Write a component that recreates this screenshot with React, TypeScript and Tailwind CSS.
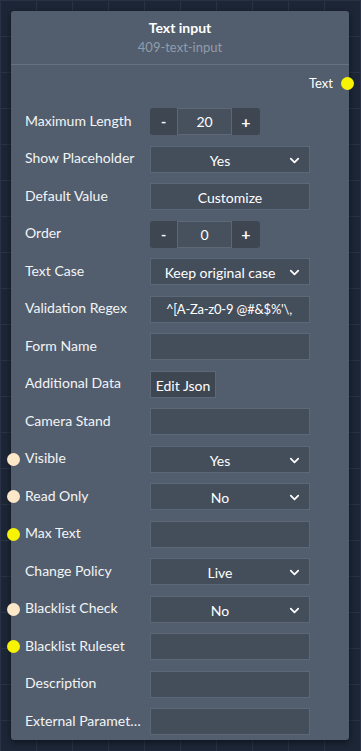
import { ChevronDown } from 'lucide-react';

type Row = {
  label: string;
  kind: 'stepper' | 'select' | 'button' | 'input' | 'json';
  value?: string;
  dot?: 'cream' | 'yellow';
};

const rows: Row[] = [
  { label: 'Maximum Length', kind: 'stepper', value: '20' },
  { label: 'Show Placeholder', kind: 'select', value: 'Yes' },
  { label: 'Default Value', kind: 'button', value: 'Customize' },
  { label: 'Order', kind: 'stepper', value: '0' },
  { label: 'Text Case', kind: 'select', value: 'Keep original case' },
  { label: 'Validation Regex', kind: 'input', value: "^[A-Za-z0-9 @#&$%'\\," },
  { label: 'Form Name', kind: 'input' },
  { label: 'Additional Data', kind: 'json' },
  { label: 'Camera Stand', kind: 'input' },
  { label: 'Visible', kind: 'select', value: 'Yes', dot: 'cream' },
  { label: 'Read Only', kind: 'select', value: 'No', dot: 'cream' },
  { label: 'Max Text', kind: 'input', dot: 'yellow' },
  { label: 'Change Policy', kind: 'select', value: 'Live' },
  { label: 'Blacklist Check', kind: 'select', value: 'No', dot: 'cream' },
  { label: 'Blacklist Ruleset', kind: 'input', dot: 'yellow' },
  { label: 'Description', kind: 'input' },
  { label: 'External Parameters', kind: 'input' },
];

function Control({ row }: { row: Row }) {
  if (row.kind === 'stepper') {
    return (
      <div className="flex h-[27px]">
        <button className="w-[27px] h-full bg-[#3e4651] rounded-l-[3px] text-[14px] font-bold text-white">-</button>
        <div className="w-[55px] h-full bg-[#47515e] border border-[#5c6877] flex items-center justify-center text-[14px] text-white">
          {row.value}
        </div>
        <button className="w-[28px] h-full bg-[#3e4651] rounded-r-[3px] text-[16px] font-bold text-white">+</button>
      </div>
    );
  }
  if (row.kind === 'select') {
    return (
      <div className="relative w-[160px] h-[27px] bg-[#444e5b] border border-[#5c6877] flex items-center text-[14px] text-white">
        <span className="flex-1 text-center pr-[20px] pt-[2px]">{row.value}</span>
        <ChevronDown className="absolute right-[7px] top-[6px] w-[15px] h-[15px]" strokeWidth={2.75} />
      </div>
    );
  }
  if (row.kind === 'button') {
    return (
      <div className="w-[160px] h-[27px] bg-[#444e5b] border border-[#5c6877] flex items-center justify-center text-[14px] text-white pt-[2px]">
        {row.value}
      </div>
    );
  }
  if (row.kind === 'json') {
    return (
      <div className="w-[66px] h-[27px] bg-[#3e4651] border border-[#5c6877] flex items-center justify-center text-[14px] text-white pt-[2px]">
        Edit Json
      </div>
    );
  }
  return (
    <div className="w-[160px] h-[27px] bg-[#444e5b] border border-[#5c6877] flex items-center text-[13px] tracking-[-0.2px] text-white pl-[15px] pr-[8px] pt-[2px]">
      <span className="whitespace-nowrap">{row.value}</span>
    </div>
  );
}

export default function App() {
  return (
    <div
      className="min-h-screen w-full p-[11px] bg-[#1d2636] bg-[linear-gradient(#283244_1px,transparent_1px),linear-gradient(90deg,#283244_1px,transparent_1px)] bg-[size:36px_36px]"
      style={{ fontFamily: 'Lato, "Open Sans", sans-serif' }}
    >
      <div className="relative w-[338px] bg-[#525e6d] rounded-[3px] shadow-[0_2px_6px_rgba(0,0,0,0.5)] pb-[5px]">
        {/* Header */}
        <div className="flex flex-col items-center pt-[7px] pb-[8px] border-b border-[#66727f]">
          <div className="text-[14px] font-bold text-white leading-[20px]">Text input</div>
          <div className="text-[13px] text-[#919cab] leading-[18px]">409-text-input</div>
        </div>

        {/* Output */}
        <div className="relative flex justify-end items-center h-[20px] mt-[9px] pr-[16px]">
          <span className="text-[13px] text-white">Text</span>
          <span className="absolute right-[-5px] top-[3px] w-[13px] h-[13px] rounded-full bg-[#f7f304]" />
        </div>

        {/* Fields */}
        <div className="flex flex-col gap-[10.5px] mt-[14px]">
          {rows.map((row) => (
            <div key={row.label} className="relative flex items-center h-[27px]">
              {row.dot && (
                <span
                  className={
                    'absolute left-[-4px] top-[7px] w-[13px] h-[13px] rounded-full ' +
                    (row.dot === 'yellow' ? 'bg-[#f7f304]' : 'bg-[#fde7c9]')
                  }
                />
              )}
              <div className="w-[139px] pl-[14px] pr-[2px] pb-[3px] text-[14px] text-[#f2f4f6] whitespace-nowrap overflow-hidden text-ellipsis">
                {row.label}
              </div>
              <Control row={row} />
            </div>
          ))}
        </div>
      </div>
    </div>
  );
}
